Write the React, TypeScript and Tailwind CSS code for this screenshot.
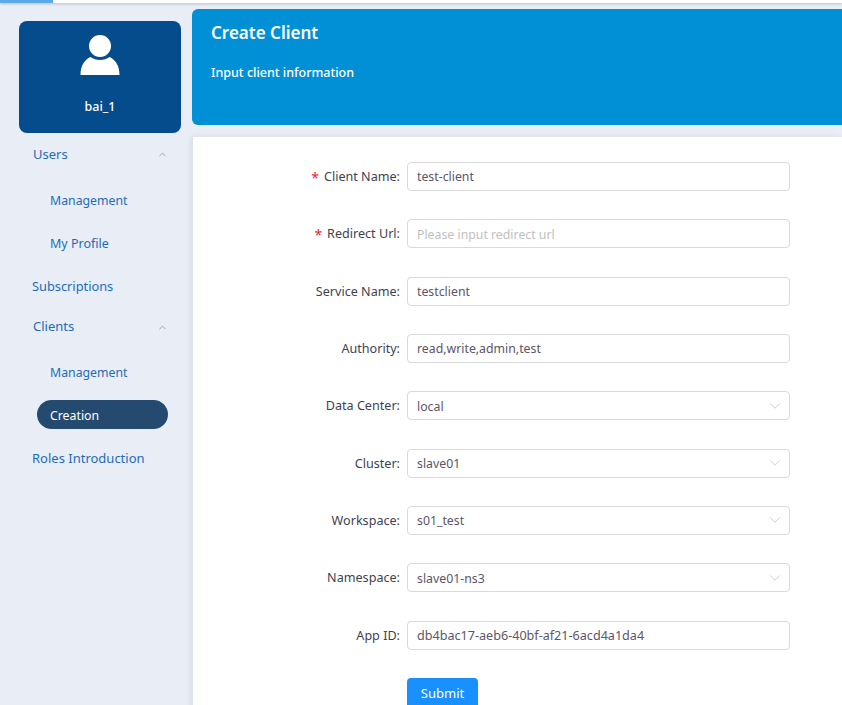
import { ChevronDown, ChevronUp } from "lucide-react";

const font = { fontFamily: '"Noto Sans", "Open Sans", sans-serif' };

const rows = [
  { label: "Client Name", value: "test-client", required: true },
  { label: "Redirect Url", placeholder: "Please input redirect url", required: true },
  { label: "Service Name", value: "testclient" },
  { label: "Authority", value: "read,write,admin,test" },
  { label: "Data Center", value: "local", select: true },
  { label: "Cluster", value: "slave01", select: true },
  { label: "Workspace", value: "s01_test", select: true },
  { label: "Namespace", value: "slave01-ns3", select: true },
  { label: "App ID", value: "db4bac17-aeb6-40bf-af21-6acd4a1da4", wide: true },
];

function FormRow({ label, value, placeholder, required, select, wide }: { label: string; value?: string; placeholder?: string; required?: boolean; select?: boolean; wide?: boolean }) {
  return (
    <div className="flex items-center h-[29px] mb-[28.334px]">
      <label className="w-[207px] pr-[7px] flex justify-end items-center text-[12.6px] text-[#3f3f4f] whitespace-nowrap">
        {required && <span className="text-[#f5222d] mr-[5px] text-[14px] leading-none pt-[3px]">*</span>}
        <span className="pt-[2px]">{label}:</span>
      </label>
      <div className={`w-[383px] h-[29px] border border-[#d9d9d9] rounded-[4px] bg-white pl-[9px] pr-[9px] flex items-center justify-between ${wide ? "text-[12.6px]" : "text-[12.3px]"}`}>
        <span className={`pt-[2px] ${value ? "text-[#5c5566]" : "text-[#bfbfbf]"}`}>{value ?? placeholder}</span>
        {select && <ChevronDown className="w-[18px] h-[18px] text-[#bfbfbf] mr-[-4px]" strokeWidth={1} />}
      </div>
    </div>
  );
}

export default function App() {
  return (
    <div className="h-[705px] w-[842px] overflow-hidden bg-[#e9eef6] flex flex-col" style={font}>
      <div className="h-[3px] bg-white shadow-[0_1px_3px_rgba(0,0,0,0.2)] shrink-0">
        <div className="h-[3px] w-[53px] bg-[#5aa9ea]" />
      </div>
      <div className="flex flex-1 min-h-0">
        <aside className="w-[192px] shrink-0 pt-[18px] pl-[19px] text-[13px] text-[#1e6bb8]">
          <div className="w-[162px] h-[112px] rounded-[8px] bg-[#054c8c] flex flex-col items-center text-white">
            <svg viewBox="0 0 40 40" className="w-[40px] h-[40px] mt-[14px]" fill="currentColor">
              <circle cx="20" cy="11" r="11" />
              <path d="M0.5 40 C0.5 30 5 24.500 10.500 22 C13 24 16.500 25 20 25 C23.500 25 27 24 29.500 22 C35 24.500 39.500 30 39.500 40 Z" />
            </svg>
            <div className="mt-[23px] text-[12.500px] font-medium">bai_1</div>
          </div>
          <nav className="w-[162px]">
            <div className="h-[43px] flex items-center justify-between pl-[14px] pr-[13px]">
              <span>Users</span>
              <ChevronUp className="w-[11px] h-[11px] text-[#7b8590]" strokeWidth={1.5} />
            </div>
            <div className="h-[50px] flex items-center pl-[31px] text-[12.3px]">Management</div>
            <div className="h-[37px] flex items-center pl-[31px] text-[12.5px]">My Profile</div>
            <div className="h-[47px] flex items-center pl-[13px] text-[12.8px]">Subscriptions</div>
            <div className="h-[34px] flex items-center justify-between pl-[14px] pr-[13px]">
              <span>Clients</span>
              <ChevronUp className="w-[11px] h-[11px] text-[#7b8590]" strokeWidth={1.5} />
            </div>
            <div className="h-[57px] pt-[1px] flex items-center pl-[31px] text-[12.3px]">Management</div>
            <div className="h-[29px] w-[131px] ml-[18px] mt-[-1px] pt-[3px] rounded-full bg-[#254a70] text-white flex items-center pl-[13px] text-[12.3px]">Creation</div>
            <div className="h-[60px] flex items-center pl-[13px]">Roles Introduction</div>
          </nav>
        </aside>
        <main className="flex-1 min-w-0 pt-[6px] flex flex-col">
          <div className="h-[116px] rounded-l-[6px] bg-[#0190d6] text-white pl-[19px] pt-[11px] shrink-0">
            <h1 className="text-[17px] font-semibold leading-[26px]">Create Client</h1>
            <p className="text-[12.500px] font-medium mt-[18px]">Input client information</p>
          </div>
          <div className="mt-[12px] ml-[1px] flex-1 bg-white pt-[25px] pl-[7px] shadow-[-2px_0_6px_rgba(0,0,0,0.08)]">
            {rows.map((r) => (
              <FormRow key={r.label} {...r} />
            ))}
            <button className="ml-[207px] w-[71px] h-[32px] bg-[#1890ff] text-white text-[13px] rounded-[4px]">Submit</button>
          </div>
        </main>
      </div>
    </div>
  );
}
